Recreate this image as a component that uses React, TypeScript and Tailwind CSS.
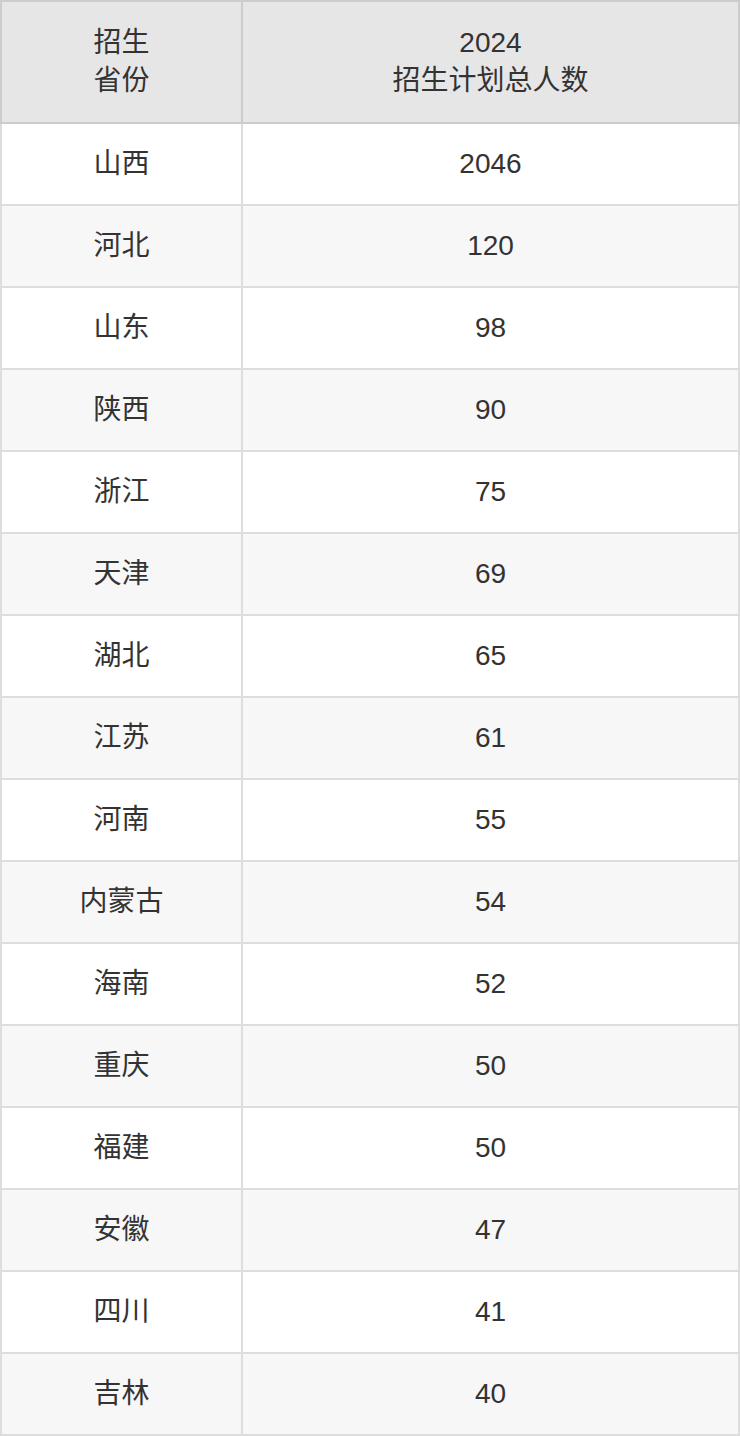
import React from "react";

const rows: [string, string][] = [
  ["山西", "2046"],
  ["河北", "120"],
  ["山东", "98"],
  ["陕西", "90"],
  ["浙江", "75"],
  ["天津", "69"],
  ["湖北", "65"],
  ["江苏", "61"],
  ["河南", "55"],
  ["内蒙古", "54"],
  ["海南", "52"],
  ["重庆", "50"],
  ["福建", "50"],
  ["安徽", "47"],
  ["四川", "41"],
  ["吉林", "40"],
];

export default function App() {
  return (
    <div
      className="w-[740px] bg-white text-[#333] text-[28px] leading-[38px]"
      style={{ fontFamily: '"Liberation Sans", Arial, "Noto Sans CJK SC", sans-serif' }}
    >
      <div className="flex h-[124px] bg-[#e6e6e6] border-2 border-[#cccccc]">
        <div className="w-[241px] shrink-0 border-r-2 border-[#cccccc] flex items-center justify-center text-center">
          <div>
            招生
            <br />
            省份
          </div>
        </div>
        <div className="flex-1 flex items-center justify-center text-center">
          <div>
            2024
            <br />
            招生计划总人数
          </div>
        </div>
      </div>
      {rows.map(([p, n], i) => (
        <div
          key={i}
          className={`flex h-[82px] border-x-2 border-b-2 border-[#dddddd] ${
            i % 2 === 1 ? "bg-[#f7f7f7]" : "bg-white"
          }`}
        >
          <div className="w-[241px] shrink-0 border-r-2 border-[#dddddd] flex items-center justify-center">
            {p}
          </div>
          <div className="flex-1 flex items-center justify-center">{n}</div>
        </div>
      ))}
    </div>
  );
}
